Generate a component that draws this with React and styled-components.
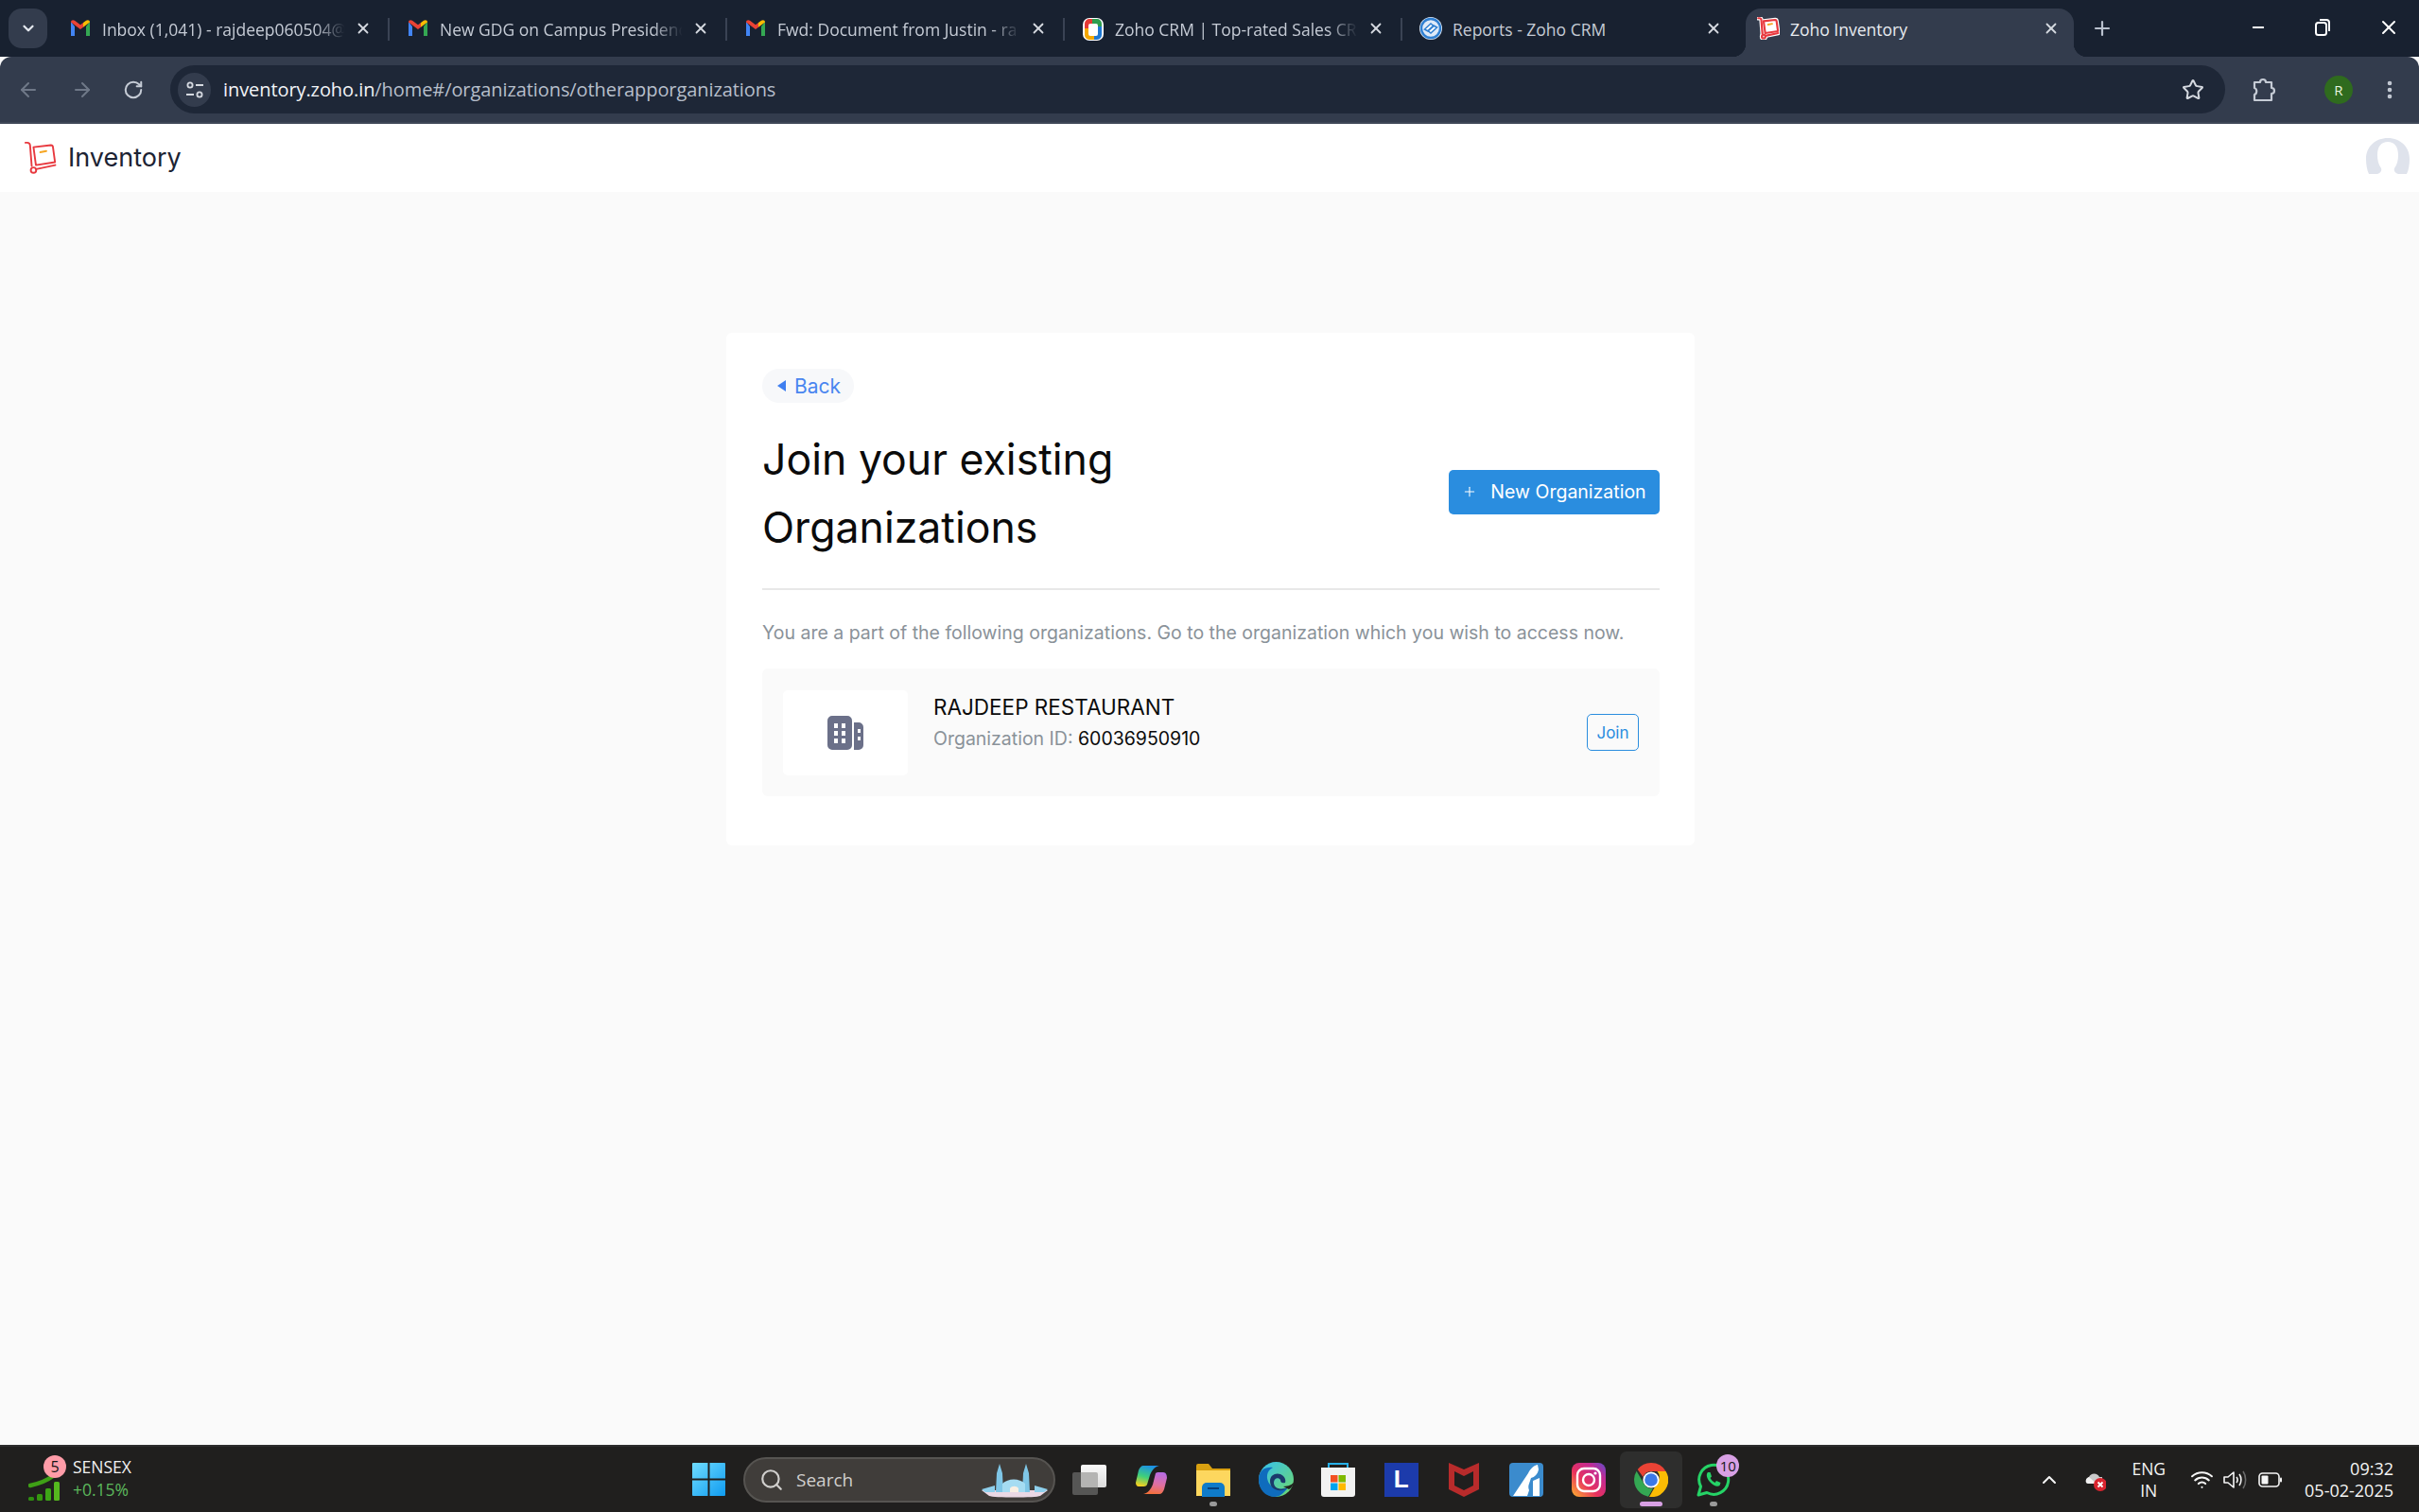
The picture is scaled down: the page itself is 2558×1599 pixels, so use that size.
import React from "react";
import styled, { createGlobalStyle } from "styled-components";
import { ArrowLeft, ArrowRight, RotateCw, Star, X, Plus, Minus, Search, ChevronUp, ChevronDown, Wifi, EllipsisVertical } from "lucide-react";

const GlobalStyle = createGlobalStyle`
  html, body { margin: 0; padding: 0; }
  body { font-family: "Inter", "Liberation Sans", sans-serif; background: #fafafa; }
  * { box-sizing: border-box; }
`;

const Page = styled.div`
  width: 2558px;
  height: 1599px;
  display: flex;
  flex-direction: column;
  overflow: hidden;
`;

/* browser chrome */
const TabStrip = styled.div`
  height: 60px;
  background: #182130;
  display: flex;
  align-items: flex-start;
  padding-left: 9px;
  position: relative;
`;
const TabSearch = styled.div`
  width: 41px;
  height: 42px;
  margin-top: 9px;
  margin-right: 5px;
  border-radius: 14px;
  background: #333c4d;
  color: #e4e8ee;
  display: flex;
  align-items: center;
  justify-content: center;
`;
const TabItem = styled.div`
  width: 357px;
  height: 60px;
  flex: none;
  padding: 0 0 0 18px;
  display: flex;
  align-items: center;
  position: relative;
  color: ${(p) => (p.$active ? "#e8ebf0" : "#c5cbd5")};
  font-family: "Open Sans", sans-serif;
  font-size: 17.5px;
  &::after {
    content: "";
    display: ${(p) => (p.$sep ? "block" : "none")};
    position: absolute;
    right: 0;
    top: 19px;
    height: 24px;
    width: 2px;
    background: #3a4354;
  }
`;
const ActiveShape = styled.div`
  position: absolute;
  left: 6px;
  right: 4px;
  top: 9px;
  bottom: 0;
  background: #333c4d;
  border-radius: 16px 16px 0 0;
  &::before, &::after {
    content: "";
    position: absolute;
    bottom: 0;
    width: 14px;
    height: 14px;
  }
  &::before {
    left: -14px;
    background: radial-gradient(circle at 0 0, #182130 14px, #333c4d 14.5px);
  }
  &::after {
    right: -14px;
    background: radial-gradient(circle at 100% 0, #182130 14px, #333c4d 14.5px);
  }
`;
const Favicon = styled.span`
  width: 24px;
  height: 24px;
  margin-right: 11px;
  flex: none;
  display: flex;
  position: relative;
`;
const TabTitle = styled.span`
  width: 262px;
  white-space: nowrap;
  position: relative;
  margin-top: 2px;
  mask-image: ${(p) => (p.$fade ? "linear-gradient(90deg, #000 86%, transparent 98%)" : "none")};
`;
const TabClose = styled.span`
  position: absolute;
  left: 320px;
  top: 21px;
  color: #d5d9e0;
  display: flex;
`;
const NewTab = styled.div`
  position: absolute;
  left: 2211px;
  top: 18px;
  color: #b9c1ce;
  display: flex;
`;
const WindowButtons = styled.div`
  position: absolute;
  right: 0;
  top: 0;
  height: 60px;
  display: flex;
  align-items: center;
  color: #fff;
`;
const WindowButton = styled.span`
  width: 68px;
  display: flex;
  align-items: center;
  justify-content: center;
  padding-bottom: 2px;
  &:last-child { padding-left: 4px; }
`;
const Toolbar = styled.div`
  height: 71px;
  background: #333c4d;
  border-radius: 12px 12px 0 0;
  border-bottom: 2px solid #3e4757;
  display: flex;
  align-items: flex-start;
  padding: 9px 0 0 0;
`;
const NavButton = styled.span`
  width: ${(p) => p.$w || 54}px;
  height: 51px;
  flex: none;
  display: flex;
  align-items: center;
  justify-content: center;
  color: ${(p) => p.$color || "#c5cbd5"};
`;
const Omnibox = styled.div`
  width: 2173px;
  height: 51px;
  flex: none;
  margin-left: 12px;
  margin-right: 14px;
  background: #1e2737;
  border-radius: 26px;
  display: flex;
  align-items: center;
  padding-left: 8px;
  padding-right: 22px;
`;
const SiteInfo = styled.span`
  width: 35px;
  height: 36px;
  border-radius: 50%;
  background: #333c4d;
  color: #d5d9e0;
  display: flex;
  align-items: center;
  justify-content: center;
  margin-right: 13px;
  flex: none;
`;
const Url = styled.span`
  flex: 1;
  font-family: "Open Sans", sans-serif;
  font-size: 20px;
  letter-spacing: -0.08px;
  color: #b7bfcb;
  b { font-weight: 400; color: #f2f4f7; }
`;
const ToolSep = styled.span`
  width: 2px;
  height: 24px;
  background: #4a5363;
  align-self: center;
  margin: 0 26px 0 11px;
`;
const ProfileDot = styled.span`
  width: 30px;
  height: 30px;
  border-radius: 50%;
  background: #2f6b1e;
  color: #e6f3df;
  font-size: 15px;
  font-family: "Open Sans", sans-serif;
  display: flex;
  align-items: center;
  justify-content: center;
`;

/* zoho app */
const AppHeader = styled.header`
  height: 72px;
  background: #fff;
  display: flex;
  align-items: center;
  padding: 0 10px 0 25px;
`;
const BrandName = styled.span`
  font-size: 27px;
  font-weight: 400;
  color: #1c2333;
  margin-left: 11px;
  margin-top: -1px;
`;
const UserAvatar = styled.span`
  margin-left: auto;
  display: flex;
  margin-top: -4px;
`;
const Main = styled.main`
  flex: 1;
  background: #fafafa;
  display: flex;
  justify-content: center;
  align-items: flex-start;
  padding: 149px 0 0 2px;
`;
const Card = styled.section`
  width: 1024px;
  background: #fff;
  border-radius: 6px;
  padding: 38px 37px 52px 38px;
`;
const BackPill = styled.a`
  display: inline-flex;
  align-items: center;
  height: 36px;
  padding: 0 14px 0 16px;
  border-radius: 18px;
  background: #f7f8fa;
  color: #4a86f0;
  font-size: 21px;
  gap: 9px;
`;
const BackCaret = styled.i`
  width: 0;
  height: 0;
  border-style: solid;
  border-width: 6px 9px 6px 0;
  border-color: transparent #3f7ff0 transparent transparent;
`;
const TitleRow = styled.div`
  display: flex;
  justify-content: space-between;
  align-items: center;
  margin-top: 22px;
  padding-bottom: 30px;
  border-bottom: 2px solid #e8e8e8;
`;
const Title = styled.h1`
  margin: 0 0 -2px;
  padding-top: 2px;
  font-size: 44.6px;
  font-weight: 400;
  line-height: 72px;
  color: #0b0b0b;
`;
const NewButton = styled.button`
  width: 223px;
  height: 47px;
  border: 0;
  border-radius: 5px;
  background: #2a8ddf;
  color: #fff;
  font-family: inherit;
  font-size: 19.5px;
  display: flex;
  align-items: center;
  justify-content: center;
  gap: 14px;
  padding: 0;
`;
const Lead = styled.p`
  margin: 30px 0 23px;
  font-size: 19.5px;
  line-height: 30px;
  color: #8a9299;
`;
const OrgRow = styled.div`
  height: 135px;
  border-radius: 6px;
  background: #fafafa;
  display: flex;
  align-items: center;
  padding: 0 22px;
`;
const OrgIconBox = styled.div`
  width: 132px;
  height: 90px;
  border-radius: 5px;
  background: #fff;
  display: flex;
  align-items: center;
  justify-content: center;
  margin-right: 27px;
`;
const OrgInfo = styled.div`
  display: flex;
  flex-direction: column;
  gap: 6px;
  margin-top: -21px;
`;
const OrgName = styled.div`
  font-size: 22.5px;
  line-height: 28px;
  color: #0b0b0b;
`;
const OrgId = styled.div`
  font-size: 19.5px;
  line-height: 26px;
  color: #8a9299;
  span { color: #0b0b0b; }
`;
const JoinButton = styled.button`
  margin-left: auto;
  width: 55px;
  height: 39px;
  border: 1.5px solid #2a8ddf;
  border-radius: 5px;
  background: transparent;
  color: #2a8ddf;
  font-family: inherit;
  font-size: 17px;
  padding: 0;
`;

/* windows taskbar */
const Taskbar = styled.footer`
  height: 71px;
  background: #201f1e;
  border-top: 2px solid #2c2c2c;
  display: flex;
  align-items: center;
  font-family: "Open Sans", sans-serif;
  color: #f2f2f2;
`;
const Widget = styled.div`
  width: 732px;
  flex: none;
  padding-left: 30px;
  display: flex;
  align-items: center;
`;
const WidgetIcon = styled.span`
  position: relative;
  display: flex;
  width: 34px;
  height: 48px;
  margin-right: 13px;
`;
const Bubble = styled.span`
  position: absolute;
  width: 24px;
  height: 24px;
  border-radius: 50%;
  background: ${(p) => p.$bg};
  color: #161616;
  font-size: ${(p) => p.$size || 16}px;
  display: flex;
  align-items: center;
  justify-content: center;
  top: ${(p) => p.$top}px;
  left: ${(p) => p.$left}px;
`;
const WidgetText = styled.div`
  font-size: 17.5px;
  line-height: 24px;
  margin-top: -3px;
  span { display: block; color: #5cb85c; }
`;
const Apps = styled.div`
  display: flex;
  align-items: center;
`;
const SearchPill = styled.div`
  width: 330px;
  height: 48px;
  margin: 0 18px 0 19px;
  border-radius: 24px;
  background: #403d3a;
  border: 2px solid #565451;
  display: flex;
  align-items: center;
  padding-left: 15px;
  color: #d0cfcd;
  font-size: 19px;
  position: relative;
  gap: 13px;
`;
const Mosque = styled.span`
  position: absolute;
  right: 6px;
  top: 5px;
  display: flex;
`;
const AppSlot = styled.span`
  width: 66.15px;
  height: 60px;
  display: flex;
  align-items: center;
  justify-content: center;
  position: relative;
  border-radius: 7px;
  background: ${(p) => (p.$active ? "#2e2e2d" : "transparent")};
`;
const RunDot = styled.i`
  position: absolute;
  bottom: 2px;
  left: 50%;
  transform: translateX(-50%);
  height: 5px;
  border-radius: 3px;
  width: ${(p) => (p.$active ? 24 : 8)}px;
  background: ${(p) => (p.$active ? "#d8a0e4" : "#9a9a9a")};
`;
const TaskView = styled.span`
  display: flex;
  margin-right: 14px;
`;
const Tray = styled.div`
  margin-left: auto;
  padding-right: 27px;
  display: flex;
  align-items: center;
  color: #f5f5f5;
`;
const LangBox = styled.div`
  font-size: 17.5px;
  line-height: 23px;
  text-align: center;
  margin: 0 26px 0 27px;
`;
const TrayIcon = styled.span`
  display: flex;
  margin-right: ${(p) => p.$gap || 0}px;
`;
const Clock = styled.div`
  font-size: 18px;
  line-height: 23px;
  text-align: right;
  margin-left: 24px;
`;

const GmailIcon = () => (
  <svg width="24" height="24" viewBox="0 0 24 24">
    <path d="M2 5v15h4V10z" fill="#4285f4" />
    <path d="M22 5v15h-4V10z" fill="#34a853" />
    <path d="M2 5.5 12 13l3-2.2V6L12 8.2 6 3.8C4 2.6 2 3.5 2 5.5z" fill="#ea4335" />
    <path d="M15 6v4.800l7-5.300c0-2-2-2.900-4-1.700z" fill="#fbbc04" />
  </svg>
);
const CrmIcon = () => (
  <svg width="24" height="26" viewBox="0 0 24 26">
    <rect x="1" y="1" width="22" height="24" rx="7" fill="#fff" />
    <path d="M3 12V7a5 5 0 0 1 5-5h3v5H9a2 2 0 0 0-2 2v3z" fill="#e53935" />
    <path d="M11 2h5a5 5 0 0 1 5 5v3h-4V9a2 2 0 0 0-2-2h-4z" fill="#2e9e4f" />
    <path d="M21 10v9a5 5 0 0 1-5 5h-3v-4h2a2 2 0 0 0 2-2v-8z" fill="#1e78d2" />
    <path d="M13 24H8a5 5 0 0 1-5-5v-7h4v6a2 2 0 0 0 2 2h4z" fill="#f5a800" />
  </svg>
);
const ReportsIcon = () => (
  <svg width="24" height="24" viewBox="0 0 24 24" fill="none">
    <circle cx="12" cy="12" r="12" fill="#dfeaf8" />
    <circle cx="12" cy="12" r="10" stroke="#2f7fd1" strokeWidth="2.4" />
    <path d="M5.500 13 12 7l3 2.500-6 5.500zM18.500 11 12 17l-3-2.500 6-5.500z" fill="#fff" stroke="#2f7fd1" strokeWidth="1.6" />
  </svg>
);
const InventoryLogo = ({ size = 36, sticker }) => {
  const handle = "M1 1h2c2 0 3 1 3.200 3L8 27";
  const box = "M10 6 29.500 3.800c1.200 0 2 .7 2.200 2L34 22.700 12.700 26z";
  const base = "M13 30.500 34.300 26";
  const red = sticker ? 3.4 : 2;
  return (
    <svg width={size} height={size} viewBox="-1 -1 38 38" fill="none" strokeLinecap="round" strokeLinejoin="round">
      {sticker && (
        <g stroke="#fff" strokeWidth="7">
          <path d={handle} />
          <path d={box} fill="#fff" />
          <path d={base} />
          <circle cx="10" cy="31.700" r="3" />
        </g>
      )}
      <path d={handle} stroke="#e8393f" strokeWidth={red} />
      <path d={box} stroke="#e8393f" strokeWidth={red} />
      <circle cx="10" cy="31.700" r="3" stroke="#e8393f" strokeWidth={red} />
      <path d={base} stroke="#e8393f" strokeWidth={red} />
      <path d="M17.500 11.700 24.300 10.300" stroke="#f6a623" strokeWidth={sticker ? 3 : 2} />
    </svg>
  );
};
const TuneIcon = () => (
  <svg width="22" height="22" viewBox="0 0 22 22" fill="none" stroke="currentColor" strokeWidth="1.8">
    <circle cx="6" cy="6" r="2.600" />
    <path d="M12 6h8M2 16h8" />
    <circle cx="16" cy="16" r="2.600" />
  </svg>
);
const ExtensionIcon = () => (
  <svg width="26" height="28" viewBox="0 0 26 28" fill="none" stroke="#c5cbd5" strokeWidth="2.2" strokeLinejoin="round">
    <path d="M3 6h6c0-4 6-4 6 0h6v6c4 0 4 6 0 6v7H3v-6c3-1 3-6 0-7z" />
  </svg>
);
const RestoreIcon = () => (
  <svg width="18" height="20" viewBox="0 0 18 20" fill="none" stroke="#fff" strokeWidth="2">
    <rect x="2" y="5" width="11" height="13" rx="2.500" />
    <path d="M6 2h7a3 3 0 0 1 3 3v9" />
  </svg>
);
const UserPlaceholder = () => (
  <svg width="46" height="38" viewBox="0 0 46 38">
    <path fillRule="evenodd" fill="#dfe3ec" d="M23 0C10 0 0 9 0 22c0 6 1 12 3 16h9c3-1 5-3 4-6-3-4-4-9-4-14C12 9 16 4 23 4s11 5 11 14c0 5-1 10-4 14-1 3 1 5 4 6h9c2-4 3-10 3-16C46 9 36 0 23 0z" />
  </svg>
);
const BuildingIcon = () => (
  <svg width="38" height="36" viewBox="0 0 38 36" fill="#6b7089">
    <path fillRule="evenodd" d="M5 0h16a5 5 0 0 1 5 5v26a5 5 0 0 1-5 5H5a5 5 0 0 1-5-5V5a5 5 0 0 1 5-5zM7 8v5h4V8zm8 0v5h4V8zM7 16v5h4v-5zm8 0v5h4v-5zM7 24v5h4v-5zm8 0v5h4v-5z" />
    <path fillRule="evenodd" d="M28 7h5a5 5 0 0 1 5 5v19a5 5 0 0 1-5 5h-5zm4 7v4h3v-4zm0 8v4h3v-4z" />
  </svg>
);
const SignalIcon = () => (
  <svg width="34" height="48" viewBox="0 0 34 48">
    <path d="M2 30C11 28 18 26 26 20" stroke="#3fa016" strokeWidth="4.5" fill="none" strokeLinecap="round" />
    <rect x="0" y="42" width="6" height="4" rx="1.500" fill="#2f8f10" />
    <rect x="9" y="39" width="6" height="7" rx="1.500" fill="#35980f" />
    <rect x="18" y="33" width="6" height="13" rx="1.500" fill="#3da516" />
    <rect x="27" y="26" width="6" height="20" rx="1.500" fill="#55b81e" />
  </svg>
);
const StartIcon = () => (
  <svg width="35" height="35" viewBox="0 0 35 35">
    <defs>
      <linearGradient id="startFill" x1="0" y1="0" x2="1" y2="1">
        <stop offset="0" stopColor="#6fdcff" />
        <stop offset="1" stopColor="#0f9bf0" />
      </linearGradient>
    </defs>
    <path fill="url(#startFill)" d="M1 0h15.500v16.500H0V1a1 1 0 0 1 1-1zM18.500 0H34a1 1 0 0 1 1 1v15.500H18.500zM0 18.500h16.500V35H1a1 1 0 0 1-1-1zM18.500 18.500H35V34a1 1 0 0 1-1 1H18.500z" />
  </svg>
);
const MosqueArt = () => (
  <svg width="70" height="36" viewBox="0 0 70 36">
    <path d="M0 28h70l-8 6c-4 2-50 2-54 0z" fill="#ead8e4" />
    <path d="M19 0l3 10 1 20h-8l1-20zM47 0l3 10 1 20h-8l1-20z" fill="#7fc6e6" />
    <path d="M22 21c6-6 18-6 24 0v9H22z" fill="#a5dcf2" />
    <path d="M30 30v-4c2-3 7-3 9 0v4z" fill="#f8efe3" />
    <path d="M0 27l14-4v7H4zM70 27l-14-4v7h10z" fill="#8fd0ec" />
  </svg>
);
const TaskViewIcon = () => (
  <svg width="36" height="32" viewBox="0 0 36 32">
    <defs>
      <linearGradient id="tvFront" x1="0" y1="0" x2="0" y2="1">
        <stop offset="0" stopColor="#fafafa" />
        <stop offset="1" stopColor="#dcdcdc" />
      </linearGradient>
    </defs>
    <rect x="0" y="8" width="27" height="24" rx="2" fill="#565655" />
    <rect x="9" y="0" width="27" height="24" rx="2" fill="url(#tvFront)" />
    <path d="M9 8h16a2 2 0 0 1 2 2v14H11a2 2 0 0 1-2-2z" fill="#b4b4b3" />
  </svg>
);
const CopilotIcon = () => (
  <svg width="33" height="30" viewBox="0 0 33 30">
    <defs>
      <linearGradient id="copA" x1="0.6" y1="0" x2="0.3" y2="1">
        <stop offset="0" stopColor="#1b8fe8" />
        <stop offset="0.55" stopColor="#3fd07a" />
        <stop offset="1" stopColor="#f5d020" />
      </linearGradient>
      <linearGradient id="copB" x1="0.6" y1="0" x2="0.4" y2="1">
        <stop offset="0" stopColor="#b76be3" />
        <stop offset="0.55" stopColor="#e070a0" />
        <stop offset="1" stopColor="#f4703a" />
      </linearGradient>
    </defs>
    <path d="M8 0h17c-5 1-8 5-10 10l-3 10c-1 2-3 2-5 2H3c-2 0-3-2-3-4L3 5c1-3 3-5 5-5z" fill="url(#copA)" />
    <path d="M33 13l-3 12c-1 3-3 5-5 5H8c5-1 8-5 10-10l3-12c1-1 2-1 3-1h5c3 0 4 3 4 6z" fill="url(#copB)" />
  </svg>
);
const FolderIcon = () => (
  <svg width="36" height="36" viewBox="0 0 36 36">
    <path d="M0 3a2 2 0 0 1 2-2h11l4 5h19v28H0z" fill="#d9a010" />
    <path d="M0 8h36v27H0z" fill="#fdd75e" />
    <path d="M6 26a5 5 0 0 1 5-5h14a5 5 0 0 1 5 5v10H6z" fill="#0f7bc9" />
    <rect x="12" y="26" width="12" height="2" fill="#073f7a" />
  </svg>
);
const EdgeIcon = () => (
  <svg width="37" height="37" viewBox="0 0 37 37">
    <defs>
      <linearGradient id="edgeA" x1="0" y1="0" x2="1" y2="1">
        <stop offset="0" stopColor="#35c1f1" />
        <stop offset="1" stopColor="#6fd86a" />
      </linearGradient>
    </defs>
    <circle cx="18.500" cy="18.500" r="18.500" fill="url(#edgeA)" />
    <path d="M0 19C0 8 8 5 15 6c-7 3-8 12-3 18 4 5 12 6 19 3-4 6-9 10-14 10C7 37 0 29 0 19z" fill="#0f6cbd" />
    <path d="M12 20c0-6 6-9 11-7 5 2 6 7 5 9-4 1-5-1-5-3-2-3-7-2-7 3 0 5 6 9 15 5-5 5-19 5-19-7z" fill="#1b3a6b" />
    <path d="M26 26c3 0 8-1 11-4v1c-1 2-3 5-5 6z" fill="#201f1e" />
  </svg>
);
const StoreIcon = () => (
  <svg width="36" height="36" viewBox="0 0 36 36">
    <path d="M8 6V1h20v5" fill="none" stroke="#27b0e8" strokeWidth="2" />
    <path d="M0 5h36v28a3 3 0 0 1-3 3H3a3 3 0 0 1-3-3z" fill="#f2f2f2" />
    <rect x="10" y="13" width="7.500" height="7.500" fill="#f25022" />
    <rect x="18.500" y="13" width="7.500" height="7.500" fill="#7fba00" />
    <rect x="10" y="21.500" width="7.500" height="7.500" fill="#00a4ef" />
    <rect x="18.500" y="21.500" width="7.500" height="7.500" fill="#ffb900" />
  </svg>
);
const LetterTile = styled.span`
  width: 36px;
  height: 36px;
  background: #1c3bab;
  color: #fff;
  font-family: "Liberation Sans", sans-serif;
  font-size: 26px;
  font-weight: 700;
  display: flex;
  align-items: center;
  justify-content: center;
`;
const McAfeeIcon = () => (
  <svg width="32" height="36" viewBox="0 0 32 36">
    <path fillRule="evenodd" d="M0 0l16 7 16-7v28l-16 8-16-8zM6 9v15l10 5 10-5V9l-10 5z" fill="#b82b2b" />
  </svg>
);
const ArcTile = () => (
  <svg width="36" height="36" viewBox="0 0 36 36">
    <rect width="36" height="36" rx="4" fill="#3b8bcd" />
    <path d="M4 35 20 11c2-4 5-8 10-9l1 5c-1 5-4 8-8 9l-2 6c-1 2-1 5 0 7l-2 6zM25 19l7-3v19h-7z" fill="#fff" />
  </svg>
);
const InstagramIcon = () => (
  <svg width="36" height="36" viewBox="0 0 36 36" fill="none">
    <defs>
      <linearGradient id="insta" x1="0" y1="1" x2="1" y2="0">
        <stop offset="0" stopColor="#fdb52d" />
        <stop offset="0.4" stopColor="#e8315e" />
        <stop offset="0.75" stopColor="#c22a94" />
        <stop offset="1" stopColor="#5a4fcf" />
      </linearGradient>
    </defs>
    <rect width="36" height="36" rx="8" fill="url(#insta)" />
    <rect x="6" y="6" width="24" height="24" rx="7" stroke="#fff" strokeWidth="2.4" />
    <circle cx="18" cy="18" r="6" stroke="#fff" strokeWidth="2.4" />
    <circle cx="25" cy="11" r="1.600" fill="#fff" />
  </svg>
);
const ChromeIcon = () => (
  <svg width="36" height="36" viewBox="0 0 36 36">
    <path d="M18 0a18 18 0 0 1 15.600 9H18a9 9 0 0 0-8.500 6L3.700 7A18 18 0 0 1 18 0z" fill="#ea4335" />
    <path d="M2.600 8.800 11 23a9 9 0 0 0 9 4l-5 8.800A18 18 0 0 1 2.600 8.800z" fill="#34a853" />
    <path d="M33.600 9A18 18 0 0 1 16 36l8.500-15a9 9 0 0 0 0-12z" fill="#fbbc04" />
    <circle cx="18" cy="18" r="8.600" fill="#fff" />
    <circle cx="18" cy="18" r="6.800" fill="#3b78e7" />
  </svg>
);
const WhatsAppIcon = () => (
  <svg width="36" height="36" viewBox="0 0 36 36" fill="none">
    <path d="M2 34l2.500-9A15.500 15.500 0 1 1 11 31.500z" stroke="#25d366" strokeWidth="3" strokeLinejoin="round" />
    <path d="M12 10c-2 2-1.500 6 2 10s8 6 10.500 4l1-3-4.500-2-1.500 2c-2-1-4-3-5-5l1.500-1.500-1.500-4.500z" fill="#25d366" />
  </svg>
);
const CloudOffIcon = () => (
  <svg width="24" height="24" viewBox="0 0 24 24">
    <path d="M3 15a5 5 0 0 1 3-6 6 6 0 0 1 11 0h3v7H5z" fill="#c9c9c9" />
    <path d="M3 15a5 5 0 0 1 3-6l8 7H5z" fill="#f1f1f1" />
    <circle cx="18" cy="17" r="7" fill="#d9252f" />
    <path d="M15.500 14.500l5 5m0-5-5 5" stroke="#fff" strokeWidth="1.8" />
  </svg>
);
const VolumeIcon = () => (
  <svg width="26" height="22" viewBox="0 0 26 22" fill="none" stroke="#f5f5f5" strokeWidth="1.6">
    <path d="M1 8v6h4l6 5V3L5 8z" strokeLinejoin="round" />
    <path d="M14 8c1.500 2 1.500 4 0 6M17 5c2.500 3.500 2.500 8.500 0 12" />
    <path d="M21 2c3.500 5 3.500 13 0 18" stroke="#6a6a6a" />
  </svg>
);
const BatteryIcon = () => (
  <svg width="25" height="16" viewBox="0 0 25 16" fill="none">
    <rect x="1" y="1" width="21" height="14" rx="3.500" stroke="#f5f5f5" strokeWidth="1.6" />
    <rect x="3.500" y="3.500" width="7" height="9" rx="1" fill="#f5f5f5" />
    <rect x="23" y="5.500" width="2" height="5" rx="1" fill="#f5f5f5" />
  </svg>
);

const tabs = [
  { title: "Inbox (1,041) - rajdeep060504@", icon: <GmailIcon />, fade: true, sep: true },
  { title: "New GDG on Campus Presidenc", icon: <GmailIcon />, fade: true, sep: true },
  { title: "Fwd: Document from Justin - ra", icon: <GmailIcon />, fade: true, sep: true },
  { title: "Zoho CRM | Top-rated Sales CR", icon: <CrmIcon />, fade: true, sep: true },
  { title: "Reports - Zoho CRM", icon: <ReportsIcon /> },
  { title: "Zoho Inventory", icon: <InventoryLogo size={24} sticker />, active: true },
];

const apps = [
  { icon: <CopilotIcon /> },
  { icon: <FolderIcon />, dot: true },
  { icon: <EdgeIcon /> },
  { icon: <StoreIcon /> },
  { icon: <LetterTile>L</LetterTile> },
  { icon: <McAfeeIcon /> },
  { icon: <ArcTile /> },
  { icon: <InstagramIcon /> },
  { icon: <ChromeIcon />, dot: true, active: true },
  { icon: <WhatsAppIcon />, dot: true, badge: "10" },
];

export default function App() {
  return (
    <Page>
      <GlobalStyle />
      <TabStrip>
        <TabSearch><ChevronDown size={18} strokeWidth={3} /></TabSearch>
        {tabs.map((t) => (
          <TabItem key={t.title} $active={t.active} $sep={t.sep}>
            {t.active && <ActiveShape />}
            <Favicon>{t.icon}</Favicon>
            <TabTitle $fade={t.fade}>{t.title}</TabTitle>
            <TabClose><X size={18} strokeWidth={2.4} /></TabClose>
          </TabItem>
        ))}
        <NewTab><Plus size={24} strokeWidth={2.2} /></NewTab>
        <WindowButtons>
          <WindowButton><Minus size={18} strokeWidth={2.4} /></WindowButton>
          <WindowButton><RestoreIcon /></WindowButton>
          <WindowButton><X size={24} strokeWidth={2} /></WindowButton>
        </WindowButtons>
      </TabStrip>

      <Toolbar>
        <NavButton $color="#6f7888" $w={60}><ArrowLeft size={24} strokeWidth={2} /></NavButton>
        <NavButton $color="#6f7888"><ArrowRight size={24} strokeWidth={2} /></NavButton>
        <NavButton><RotateCw size={22} strokeWidth={2.2} /></NavButton>
        <Omnibox>
          <SiteInfo><TuneIcon /></SiteInfo>
          <Url><b>inventory.zoho.in</b>/home#/organizations/otherapporganizations</Url>
          <Star size={24} color="#d5d9e0" strokeWidth={2} />
        </Omnibox>
        <NavButton $w={54}><ExtensionIcon /></NavButton>
        <ToolSep />
        <NavButton $w={30}><ProfileDot>R</ProfileDot></NavButton>
        <NavButton $w={78} $color="#c5cbd5"><EllipsisVertical size={24} strokeWidth={2.6} /></NavButton>
      </Toolbar>

      <AppHeader>
        <InventoryLogo />
        <BrandName>Inventory</BrandName>
        <UserAvatar><UserPlaceholder /></UserAvatar>
      </AppHeader>

      <Main>
        <Card>
          <BackPill><BackCaret />Back</BackPill>
          <TitleRow>
            <Title>Join your existing<br />Organizations</Title>
            <NewButton><Plus size={16} strokeWidth={1.6} />New Organization</NewButton>
          </TitleRow>
          <Lead>You are a part of the following organizations. Go to the organization which you wish to access now.</Lead>
          <OrgRow>
            <OrgIconBox><BuildingIcon /></OrgIconBox>
            <OrgInfo>
              <OrgName>RAJDEEP RESTAURANT</OrgName>
              <OrgId>Organization ID: <span>60036950910</span></OrgId>
            </OrgInfo>
            <JoinButton>Join</JoinButton>
          </OrgRow>
        </Card>
      </Main>

      <Taskbar>
        <Widget>
          <WidgetIcon>
            <SignalIcon />
            <Bubble $bg="#ff9ca8" $top={-2} $left={16}>5</Bubble>
          </WidgetIcon>
          <WidgetText>SENSEX<span>+0.15%</span></WidgetText>
        </Widget>
        <Apps>
          <StartIcon />
          <SearchPill>
            <Search size={26} strokeWidth={2} />
            Search
            <Mosque><MosqueArt /></Mosque>
          </SearchPill>
          <TaskView><TaskViewIcon /></TaskView>
          {apps.map((a, i) => (
            <AppSlot key={i} $active={a.active}>
              {a.icon}
              {a.dot && <RunDot $active={a.active} />}
              {a.badge && <Bubble $bg="#d8a0e4" $size={15} $top={3} $left={36}>{a.badge}</Bubble>}
            </AppSlot>
          ))}
        </Apps>
        <Tray>
          <TrayIcon $gap={24}><ChevronUp size={24} strokeWidth={2} /></TrayIcon>
          <TrayIcon><CloudOffIcon /></TrayIcon>
          <LangBox>ENG<br />IN</LangBox>
          <TrayIcon $gap={10}><Wifi size={25} strokeWidth={2} /></TrayIcon>
          <TrayIcon $gap={11}><VolumeIcon /></TrayIcon>
          <TrayIcon><BatteryIcon /></TrayIcon>
          <Clock>09:32<br />05-02-2025</Clock>
        </Tray>
      </Taskbar>
    </Page>
  );
}
